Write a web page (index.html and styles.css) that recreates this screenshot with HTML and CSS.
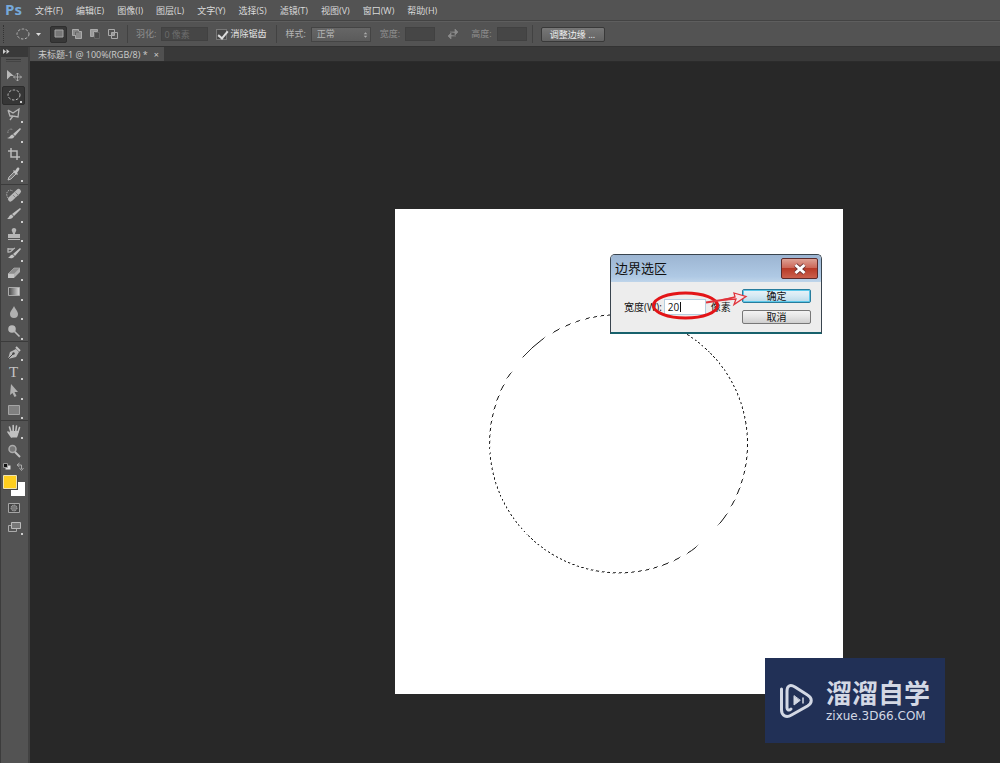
FILE: index.html
```html
<!DOCTYPE html>
<html lang="zh-CN">
<head>
<meta charset="utf-8">
<title>未标题-1 @ 100%(RGB/8)</title>
<link rel="stylesheet" href="styles.css">
</head>
<body>
<div class="app">
  <header class="menubar">
    <span class="brand">Ps</span>
    <nav class="menus">
      <button>文件(F)</button><button>编辑(E)</button><button>图像(I)</button><button>图层(L)</button><button>文字(Y)</button><button>选择(S)</button><button>滤镜(T)</button><button>视图(V)</button><button>窗口(W)</button><button>帮助(H)</button>
    </nav>
  </header>

  <div class="options">
    <span class="grip"></span>
    <button class="preset" aria-label="椭圆选框工具">
      <svg width="26" height="14" viewBox="0 0 26 14"><ellipse cx="7" cy="7" rx="6" ry="5" fill="none" stroke="#b5b5b5" stroke-dasharray="2.5 1.5"/><path d="M20 6h5l-2.500 3z" fill="#ddd"/></svg>
    </button>
    <div class="modes">
      <button class="mode mode-on" aria-label="新选区"><svg width="12" height="12" viewBox="0 0 12 12"><path d="M2 2h8v7H2z" fill="#777" stroke="#a5a5a5"/></svg></button>
      <button class="mode" aria-label="添加到选区"><svg width="12" height="12" viewBox="0 0 12 12"><path d="M1.500 1.500h6v2h3v7h-6v-3h-3z" fill="#8a8a8a" stroke="#aaa"/><path d="M4.500 7V4H8" fill="none" stroke="#666"/></svg></button>
      <button class="mode" aria-label="从选区减去"><svg width="12" height="12" viewBox="0 0 12 12"><path d="M1.500 1.500h7v2h-4v5h-3z" fill="#999" stroke="#aaa"/><path d="M5.500 4.500h5v6h-5z" fill="#4b4b4b" stroke="#666"/></svg></button>
      <button class="mode" aria-label="与选区交叉"><svg width="12" height="12" viewBox="0 0 12 12"><path d="M1.500 1.500h6v6h-6zM4.500 4.500h6v6h-6z" fill="none" stroke="#aaa"/><path d="M5 5h2v2H5z" fill="#999"/></svg></button>
    </div>
    <span class="rule"></span>
    <label class="field dim">羽化:<input class="box box-feather" value="0 像素"></label>
    <label class="check"><input type="checkbox" checked>消除锯齿</label>
    <span class="rule rule-wide"></span>
    <label class="field">样式:<span class="select-wrap"><select><option>正常</option></select><svg width="5" height="8" viewBox="0 0 7 8"><path d="M1 3l2.500-3L6 3zM1 5l2.500 3L6 5z" fill="#aaa"/></svg></span></label>
    <label class="field dim">宽度:<input class="box"></label>
    <button class="swap" aria-label="交换"><svg width="12" height="12" viewBox="0 0 12 12"><path d="M3 4h5V1l3 3-3 3V5M9 8H4v3L1 8l3-3v2" fill="#8a8a8a" stroke="#8a8a8a" stroke-width=".7"/></svg></button>
    <label class="field dim">高度:<input class="box"></label>
    <span class="rule rule-tight"></span>
    <button class="refine">调整边缘 ...</button>
  </div>

  <div class="main">
    <aside class="tools">
      <div class="tools-head"><svg width="7" height="5" viewBox="0 0 7 5"><path d="M0 0l3 2.500L0 5zM3.500 0l3 2.500-3 2.500z" fill="#ccc"/></svg></div>
      <div class="handle"></div>
      <div class="group group-a">
        <button class="tool" aria-label="移动"><svg viewBox="0 0 18 16"><path d="M2 2l7 6H5.500L2 11.500z" fill="#b8b8b8"/><path d="M12.500 5v8M8.500 9h8M11 6.500L12.500 5 14 6.500M11 11.500l1.500 1.500 1.500-1.500M10 7.500L8.500 9l1.500 1.500M15 7.500L16.500 9 15 10.500" fill="none" stroke="#b8b8b8" stroke-width=".8"/></svg></button>
        <button class="tool more on" aria-label="椭圆选框"><svg viewBox="0 0 18 16"><ellipse cx="9" cy="8" rx="6" ry="5" fill="none" stroke="#bbb" stroke-dasharray="2.500 1.500"/></svg></button>
        <button class="tool more" aria-label="套索"><svg viewBox="0 0 18 16"><path d="M3 3l5 3 6-4-1 8-5-1-3 4M3 3l2 6h3" fill="none" stroke="#b5b5b5" stroke-width="1.300"/></svg></button>
        <button class="tool more" aria-label="快速选择"><svg viewBox="0 0 18 16"><path d="M3 7a3 3 0 0 1 5-3" fill="none" stroke="#999" stroke-dasharray="1.500 1"/><path d="M15 2l1 1-6 7-2-2zM7.500 8.500l2 2C8 13 5 13 2 12c3 0 3-3 5.500-3.500z" fill="#c0c0c0"/></svg></button>
        <button class="tool more" aria-label="裁剪"><svg viewBox="0 0 18 16"><path d="M6 2v9h9M3 5h9v9" fill="none" stroke="#bbb" stroke-width="1.500"/></svg></button>
        <button class="tool more" aria-label="吸管"><svg viewBox="0 0 18 16"><path d="M3 14l1-3 5-5 2 2-5 5z" fill="#777" stroke="#bbb"/><path d="M8 5l1-1 1 1 2-3c2-1 3 0 2 2l-2 3 1 1-1 1z" fill="#c4c4c4"/></svg></button>
      </div>
      <div class="group group-b">
        <button class="tool more" aria-label="修复画笔"><svg viewBox="0 0 18 16"><path d="M5.500 12L13.500 4.500" stroke="#b8b8b8" stroke-width="5" stroke-linecap="round"/><path d="M8 8l3 3M10.500 5.500l3 3" stroke="#858585"/><path d="M3 11C1 8 1 4 5 3l3 1" fill="none" stroke="#aaa" stroke-dasharray="1.500 1"/></svg></button>
        <button class="tool more" aria-label="画笔"><svg viewBox="0 0 18 16"><path d="M15 2l1 1-7 7-2-2zM6.500 8.500l2 2C7 13 5 13 2 13c2-1 2-4 4.500-4.500z" fill="#c0c0c0"/></svg></button>
        <button class="tool more" aria-label="图章"><svg viewBox="0 0 18 16"><path d="M8 8c0-2-2-3-1-5 1-1.500 3-1.500 4 0 1 2-1 3-1 5h5v4H3V8zM3 13h12v1H3z" fill="#b5b5b5"/></svg></button>
        <button class="tool more" aria-label="历史记录画笔"><svg viewBox="0 0 18 16"><path d="M15 3l1 1-6 7-2-2zM7.500 9.500l2 2C8 14 5 13 3 13c2-1 2-3 4.500-3.500z" fill="#c4c4c4"/><path d="M3 4h6M3 3v4c4 1 4-3 7-4" fill="none" stroke="#b5b5b5" stroke-width="1.300"/></svg></button>
        <button class="tool more" aria-label="橡皮擦"><svg viewBox="0 0 18 16"><path d="M3 9l6-6h6l-6 6z" fill="#8d8d8d" stroke="#bbb" stroke-width=".6"/><path d="M3 9h6v4H3z" fill="#c4c4c4"/><path d="M9 9l6-6v4l-6 6z" fill="#b0b0b0"/></svg></button>
        <button class="tool more" aria-label="渐变"><svg viewBox="0 0 18 16"><defs><linearGradient id="ramp"><stop stop-color="#444"/><stop offset="1" stop-color="#ddd"/></linearGradient></defs><path d="M3.500 3.500h11v8h-11z" fill="url(#ramp)" stroke="#aaa"/></svg></button>
        <button class="tool more" aria-label="模糊"><svg viewBox="0 0 18 16"><path d="M9 2c1 3 4 5 4 8a4 4 0 0 1-8 0c0-3 3-5 4-8z" fill="#b0b0b0"/></svg></button>
        <button class="tool more" aria-label="减淡"><svg viewBox="0 0 18 16"><circle cx="7" cy="6" r="3.800" fill="#b8b8b8"/><path d="M9.500 8.500l5 5" stroke="#bbb" stroke-width="1.600"/></svg></button>
      </div>
      <div class="group group-c">
        <button class="tool more" aria-label="钢笔"><svg viewBox="0 0 18 16"><path d="M3 14l2-7 6-3 3 3-3 5z" fill="#b8b8b8"/><path d="M11 2l4 4" stroke="#c4c4c4" stroke-width="2"/><path d="M3 14l5-5" stroke="#444"/><circle cx="8.500" cy="8.500" r="1.200" fill="#444"/></svg></button>
        <button class="tool more letter" aria-label="文字">T</button>
        <button class="tool more" aria-label="路径选择"><svg viewBox="0 0 18 16"><path d="M6 1l7 8h-3.500l2 4-2 1-2-4L5 12z" fill="#b0b0b0"/></svg></button>
        <button class="tool more" aria-label="矩形"><svg viewBox="0 0 18 16"><path d="M3.500 3.500h11v9h-11z" fill="#808080" stroke="#a5a5a5"/></svg></button>
      </div>
      <div class="group group-d">
        <button class="tool more" aria-label="抓手"><svg viewBox="0 0 18 16"><path d="M6.500 14L3 9M6 9L4.500 4M8.200 8V2.500M10.800 8l.7-5M13 9l1.500-4.500" stroke="#c0c0c0" stroke-width="1.600" stroke-linecap="round"/><path d="M5 8h9l-1 4-1 2.500H7L4 10z" fill="#c0c0c0"/></svg></button>
        <button class="tool" aria-label="缩放"><svg viewBox="0 0 18 16"><circle cx="7.500" cy="6" r="3.500" fill="#777" stroke="#aaa" stroke-width="1.500"/><path d="M10 9l5 5" stroke="#c0c0c0" stroke-width="2"/></svg></button>
      </div>
      <svg class="swatches" width="24" height="36" viewBox="0 0 24 36"><path d="M4.500 4.500h5v4h-5z" fill="#ddd"/><path d="M2.500 2.500h4v4h-4z" fill="#111" stroke="#999"/><path d="M17 4h3.500v4M18.500 2L16 4l2.500 2M18.500 7l2 2.500L22.500 7" fill="none" stroke="#aaa"/><path d="M10 21h14v14H10z" fill="#fff"/><path d="M2 14h15v15H2z" fill="#444"/><path d="M2.500 14.500h13v13h-13z" fill="#ffcf1f" stroke="#eee3b5"/></svg>
      <button class="tool" aria-label="快速蒙版"><svg viewBox="0 0 18 16"><path d="M3.500 3.500h11v9h-11z" fill="#444" stroke="#a5a5a5"/><circle cx="9" cy="8" r="3" fill="#777" stroke="#bbb" stroke-dasharray="1 1"/></svg></button>
      <button class="tool more" aria-label="屏幕模式"><svg viewBox="0 0 18 16"><path d="M3.500 6.500h8v6h-8z" fill="#555" stroke="#aaa"/><path d="M6.500 3.500h9v6h-9z" fill="#777" stroke="#bbb"/></svg></button>
    </aside>

    <section class="work">
      <div class="tabs"><div class="tab">未标题-1 @ 100%(RGB/8) *<button aria-label="关闭">×</button></div></div>
      <div class="stage">
        <svg class="doc" viewBox="395 209 448 485">
          <defs>
            <linearGradient id="antsTop" gradientUnits="userSpaceOnUse" spreadMethod="repeat" x1="439.650" y1="439.650" x2="442.750" y2="442.750"><stop stop-color="#111"/><stop offset=".5" stop-color="#111"/><stop offset=".5" stop-color="#fff"/><stop offset="1" stop-color="#fff"/></linearGradient>
            <linearGradient id="antsLeft" gradientUnits="userSpaceOnUse" spreadMethod="repeat" x1="441.500" y1="441.500" x2="444.450" y2="444.450"><stop stop-color="#111"/><stop offset=".48" stop-color="#111"/><stop offset=".48" stop-color="#fff"/><stop offset="1" stop-color="#fff"/></linearGradient>
            <linearGradient id="antsEnd" gradientUnits="userSpaceOnUse" spreadMethod="repeat" x1="621.600" y1="621.600" x2="618.550" y2="618.550"><stop stop-color="#111"/><stop offset=".5" stop-color="#111"/><stop offset=".5" stop-color="#fff"/><stop offset="1" stop-color="#fff"/></linearGradient>
          </defs>
          <g fill="none">
            <path d="M522.500 357.400A129 129 0 0 1 709.700 352.300" stroke="url(#antsTop)"/>
            <path d="M521.500 358.500A129 129 0 0 0 527.300 534.700" stroke="url(#antsLeft)"/>
            <path d="M709.700 352.300A129 129 0 0 1 717.500 526.500" stroke="url(#antsEnd)"/>
            <path d="M527.300 534.700A129 129 0 0 0 701 543.500" stroke="url(#antsEnd)"/>
          </g>
        </svg>

        <form class="dialog">
          <div class="dialog-title"><span>边界选区</span>
            <button type="button" class="close" aria-label="关闭"><svg width="18" height="14" viewBox="0 0 18 14"><path d="M4.500 3l9 8M13.500 3l-9 8" stroke="#6b3535" stroke-width="4.500"/><path d="M4.500 3l9 8M13.500 3l-9 8" stroke="#fff" stroke-width="3"/></svg></button>
          </div>
          <div class="dialog-body">
            <label class="width">宽度(W):<input value="20"></label><span class="unit">像素</span>
            <div class="actions"><button type="button" class="ok">确定</button><button type="button">取消</button></div>
          </div>
        </form>
        <svg class="marks" width="108" height="36" viewBox="645 286 108 36" fill="none"><path d="M680.500 302v10" stroke="#111"/><ellipse cx="685.500" cy="305.500" rx="32" ry="12.500" stroke="#e31518" stroke-width="3"/><path d="M706 302.500L735 298" stroke="#e0343b" stroke-width="2"/><path d="M734 293l12 3.500-12 8 2-5.500-14 1 13-3z" fill="#f6e6ea" stroke="#e0343b" stroke-width="1.300"/></svg>

        <div class="watermark">
          <svg width="36" height="38" viewBox="0 0 36 38" fill="none" stroke="#d3d8e4" stroke-linecap="round" stroke-linejoin="round"><path d="M2.500 7v21c0 6 5 8 10 5l16-9c5-3 5-8 0-11L16 5c-5-3-8-1-8 4v17c0 2 2 3 4 1" stroke-width="3"/><path d="M15 14v9l6-4.500z" fill="#d3d8e4" stroke-width="1"/><path d="M24 16v5" stroke-width="1.500"/></svg>
          <div><div class="wm-name">溜溜自学</div><div class="wm-url">zixue.3D66.COM</div></div>
        </div>
      </div>
    </section>
  </div>
</div>
</body>
</html>
```
FILE: styles.css
```css
* { box-sizing: border-box; }
body {
  margin: 0;
  background: #282828;
  color: #dadada;
  font: 9px/12px "Open Sans", "Noto Sans CJK SC", sans-serif;
}
button, input, select { font: inherit; color: inherit; margin: 0; padding: 0; border: 0; background: none; }
svg { display: block; }
.app { height: 100vh; display: flex; flex-direction: column; overflow: hidden; }

.menubar {
  height: 21px;
  display: flex;
  align-items: center;
  background: #535353;
  border-bottom: 1px solid #434343;
}
.brand { width: 35px; padding-left: 5px; color: #76a9da; font: bold 15px/18px "Open Sans", sans-serif; margin-bottom: 2px; }
.menus { display: flex; gap: 13px; padding-top: 1px; }

.options {
  height: 26px;
  display: flex;
  align-items: center;
  background: #535353;
  border-top: 1px solid #5e5e5e;
  border-bottom: 1px solid #333;
  color: #b5b5b5;
}
.grip { width: 2px; height: 18px; margin: 0 11px 0 3px; border-left: 1px dotted #333; }
.preset { width: 26px; margin-right: 8px; }
.modes { display: flex; gap: 1px; }
.mode { width: 17px; height: 17px; display: grid; place-items: center; }
.mode-on { background: #383838; border: 1px solid #2e2e2e; border-radius: 2px; }
.rule { width: 1px; height: 18px; margin: 0 8px 0 6px; background: #424242; }
.field { display: flex; align-items: center; gap: 5px; }
.dim { color: #8f8f8f; }
.box { width: 30px; height: 14px; margin-right: 12px; background: #464646; border: 1px solid #414141; color: #6c6c6c; }
.box-feather { width: 47px; margin-right: 8px; padding-left: 2px; }
.check { display: flex; align-items: center; gap: 3px; color: #e6e6e6; }
.check input {
  appearance: none;
  width: 11px;
  height: 11px;
  border: 1px solid #777;
  background: #484848;
  position: relative;
}
.check input:checked::after {
  content: "";
  position: absolute;
  left: 3px;
  top: -1px;
  width: 4px;
  height: 8px;
  border: solid #ddd;
  border-width: 0 2px 2px 0;
  transform: rotate(40deg);
}
.rule-wide { margin: 0 8px 0 10px; }
.select-wrap { position: relative; margin-right: 9px; }
.select-wrap select {
  appearance: none;
  display: block;
  width: 60px;
  height: 15px;
  padding-left: 5px;
  background: linear-gradient(#666, #5b5b5b);
  border: 1px solid #444;
  color: #b5b5b5;
}
.select-wrap svg { position: absolute; right: 3px; top: 4px; pointer-events: none; }
.swap { margin-right: 12px; }
.rule-tight { margin: 0 8px 0 -7px; }
.refine {
  width: 64px;
  height: 15px;
  line-height: 13px;
  background: linear-gradient(#777, #626262);
  border: 1px solid #393939;
  border-radius: 2px;
  color: #eee;
}

.main { flex: 1; min-height: 0; display: flex; }
.tools {
  width: 30px;
  background: #535353;
  border-left: 1px solid #3c3c3c;
  border-right: 2px solid #424242;
}
.tools-head { height: 10px; padding: 2px; background: #393939; }
.handle { width: 15px; height: 3px; margin: 2px 5px 4px; border-top: 1px solid #393939; border-bottom: 1px solid #444; }
.group { display: grid; grid-auto-rows: 1fr; border-bottom: 1px solid #3b3b3b; }
.group-a { height: 119px; }
.group-b { height: 157px; }
.group-c { height: 79px; padding-top: 1px; }
.group-d { height: 40px; border: 0; }
.tool { width: 23px; height: 19px; margin-left: 1px; display: grid; place-items: center; position: relative; }
.tool svg { width: 18px; height: 16px; }
.more::after { content: ""; position: absolute; right: 2px; bottom: 1px; width: 2px; height: 2px; background: #ccc; }
.on { background: #363636; border: 1px solid #2c2c2c; border-radius: 2px; }
.letter { font: 15px/18px "Liberation Serif", serif; color: #c4c4c4; }
.swatches { margin-bottom: 1px; }

.work { flex: 1; min-width: 0; display: flex; flex-direction: column; }
.tabs { height: 15px; display: flex; background: #393939; border-bottom: 1px solid #2b2b2b; }
.tab { display: flex; align-items: center; gap: 6px; padding: 2px 5px 0 8px; background: #505050; color: #ccc; }
.stage { flex: 1; min-height: 0; position: relative; overflow: hidden; }
.doc { position: absolute; left: 365px; top: 147px; width: 448px; height: 485px; background: #fff; }

.dialog {
  position: absolute;
  left: 580px;
  top: 192px;
  width: 212px;
  background: #ededed;
  border: 1px solid #39444e;
  border-bottom: 2px solid #17616c;
  border-radius: 5px 5px 0 0;
  overflow: hidden;
  color: #111;
  font-size: 10px;
}
.dialog-title {
  height: 27px;
  display: flex;
  justify-content: space-between;
  padding: 3px 3px 0 4px;
  background: linear-gradient(#9cb5d2, #afc9e4 80%, #bfd5ea);
  font-size: 13px;
  line-height: 21px;
}
.close {
  width: 37px;
  height: 21px;
  display: grid;
  place-items: center;
  background: linear-gradient(#dda194, #cc6555 48%, #b83a27 50%, #cb604d);
  border: 1px solid #5e2a2a;
  border-radius: 2px;
}
.dialog-body { display: flex; align-items: flex-start; padding: 7px 10px 8px 13px; }
.width { display: flex; align-items: center; gap: 2px; margin-top: 10px; white-space: nowrap; }
.width input { width: 42px; height: 16px; padding-left: 3px; background: #fff; border: 1px solid #b5cfe0; }
.unit { margin: 12px 0 0 5px; white-space: nowrap; }
.actions { margin-left: auto; display: grid; gap: 7px; }
.actions button {
  width: 69px;
  height: 14px;
  line-height: 12px;
  border: 1px solid #777;
  border-radius: 2px;
  background: linear-gradient(#f3f3f3, #e4e4e4 50%, #cfcfcf);
}
.actions .ok { border-color: #287c9c; background: linear-gradient(#e9f3f8, #d5e9f3 50%, #b9dae9); box-shadow: inset 0 0 0 1px #5cc8ea; }
.marks { position: absolute; left: 615px; top: 224px; pointer-events: none; }

.watermark {
  position: absolute;
  right: 55px;
  bottom: 20px;
  width: 180px;
  height: 85px;
  display: flex;
  align-items: center;
  gap: 11px;
  padding-left: 14px;
  background: #213056;
  color: #d3d8e4;
}
.wm-name { font: bold 26px/30px "Liberation Sans", "Noto Sans CJK SC", sans-serif; }
.wm-url { font: 12px/14px "DejaVu Sans", sans-serif; }
```
